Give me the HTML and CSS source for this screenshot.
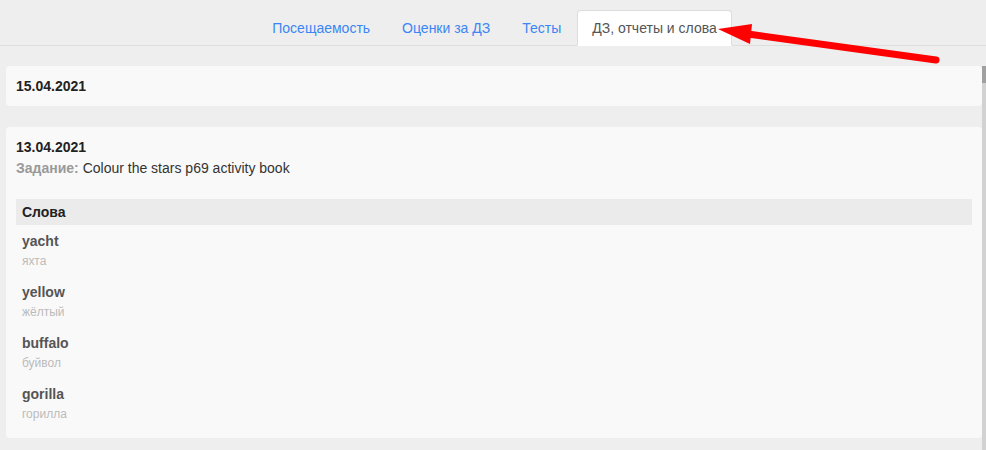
FILE: index.html
```html
<!DOCTYPE html>
<html lang="ru">
<head>
  <meta charset="UTF-8">
  <title>ДЗ, отчеты и слова</title>
  <link rel="stylesheet" href="styles.css">
</head>
<body>

<div class="tabs">
  <a class="tab">Посещаемость</a>
  <a class="tab">Оценки за ДЗ</a>
  <a class="tab">Тесты</a>
  <a class="tab active">ДЗ, отчеты и слова</a>
</div>

<div class="main">
  <div class="list">
    <div class="card">
      <div class="date">15.04.2021</div>
    </div>

    <div class="card">
      <div class="date">13.04.2021</div>
      <div class="task"><b>Задание:</b> Colour the stars p69 activity book</div>

      <div class="words">
        <div class="words-head">Слова</div>
        <div class="word">
          <div class="en">yacht</div>
          <div class="ru">яхта</div>
        </div>
        <div class="word">
          <div class="en">yellow</div>
          <div class="ru">жёлтый</div>
        </div>
        <div class="word">
          <div class="en">buffalo</div>
          <div class="ru">буйвол</div>
        </div>
        <div class="word">
          <div class="en">gorilla</div>
          <div class="ru">горилла</div>
        </div>
      </div>
    </div>
  </div>
  <div class="scrollbar"><div class="thumb"></div></div>
</div>

<svg class="arrow" width="986" height="80" viewBox="0 0 986 80">
  <line x1="748" y1="34" x2="936" y2="60" stroke="#ff0000" stroke-width="7" stroke-linecap="round"/>
  <polygon points="718,29 752,24 750,44" fill="#ff0000"/>
</svg>

</body>
</html>
```

FILE: styles.css
```css
body {
  margin: 0;
  background: #eeeeee;
  font-family: "Liberation Sans", Arial, sans-serif;
  font-size: 14px;
  color: #333;
  height: 450px;
  overflow: hidden;
  position: relative;
}

.tabs {
  display: flex;
  justify-content: center;
  padding-top: 10px;
  border-bottom: 1px solid #dddddd;
  padding-left: 2px;
}

.tab {
  font-size: 14px;
  line-height: 20px;
  padding: 7px 15px 7px;
  margin-bottom: -1px;
  border: 1px solid transparent;
  border-radius: 4px 4px 0 0;
  color: #3b86f2;
  cursor: pointer;
}

.tab.active {
  background: #fff;
  color: #555;
  border-color: #dddddd;
  border-bottom-color: #fff;
  padding: 7px 14px 7px;
}

.main {
  display: flex;
  padding-top: 20px;
}

.list {
  flex: 1;
  padding-left: 6px;
}

.card {
  background: #f9f9f9;
  border-radius: 4px;
  padding: 10px;
  margin-bottom: 21px;
}

.date {
  font-weight: bold;
  line-height: 20px;
  color: #222;
}

.task {
  line-height: 20px;
  margin-top: 1px;
}

.task b {
  color: #999;
}

.words {
  margin-top: 21px;
}

.words-head {
  background: #ebebeb;
  font-weight: bold;
  line-height: 26px;
  padding: 0 6px;
  color: #222;
}

.word {
  padding: 7px 6px 5px;
}

.word:last-child {
  padding-bottom: 4px;
}

.en {
  font-weight: bold;
  line-height: 19px;
  color: #555;
}

.ru {
  font-size: 12px;
  line-height: 20px;
  color: #bbbbbb;
}

.scrollbar {
  width: 4px;
  background: #d2d2d2;
  height: 390px;
}

.thumb {
  height: 17px;
  background: #a0a0a0;
}

.arrow {
  position: absolute;
  top: 0;
  left: 0;
}
```
